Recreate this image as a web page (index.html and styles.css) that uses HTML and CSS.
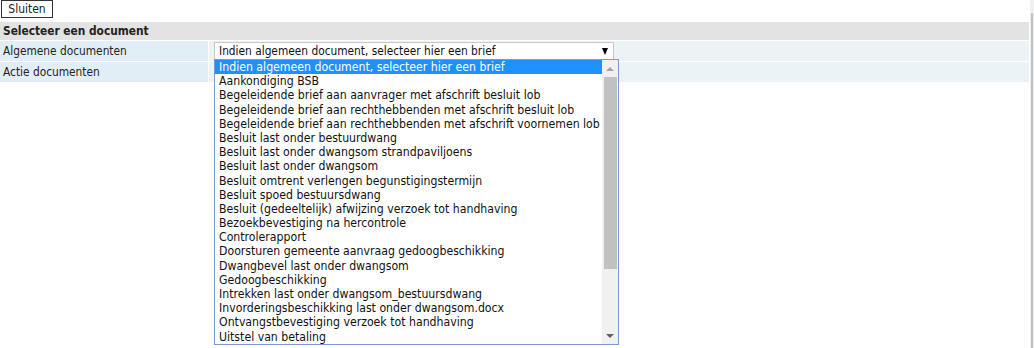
FILE: index.html
```html
<!DOCTYPE html>
<html>
<head>
<meta charset="utf-8">
<link rel="stylesheet" href="styles.css">
</head>
<body>
<div class="page">
  <div class="toolbar"><button class="btn">Sluiten</button></div>
  <div class="table">
    <div class="head">Selecteer een document</div>
    <div class="row">
      <div class="label">Algemene documenten</div>
      <div class="value">
        <div class="select-wrap">
          <div class="select"><span>Indien algemeen document, selecteer hier een brief</span><span class="arrow"></span></div>
          <div class="dropdown">
            <ul class="options">
              <li class="sel">Indien algemeen document, selecteer hier een brief</li>
              <li>Aankondiging BSB</li>
              <li>Begeleidende brief aan aanvrager met afschrift besluit lob</li>
              <li>Begeleidende brief aan rechthebbenden met afschrift besluit lob</li>
              <li>Begeleidende brief aan rechthebbenden met afschrift voornemen lob</li>
              <li>Besluit last onder bestuurdwang</li>
              <li>Besluit last onder dwangsom strandpaviljoens</li>
              <li>Besluit last onder dwangsom</li>
              <li>Besluit omtrent verlengen begunstigingstermijn</li>
              <li>Besluit spoed bestuursdwang</li>
              <li>Besluit (gedeeltelijk) afwijzing verzoek tot handhaving</li>
              <li>Bezoekbevestiging na hercontrole</li>
              <li>Controlerapport</li>
              <li>Doorsturen gemeente aanvraag gedoogbeschikking</li>
              <li>Dwangbevel last onder dwangsom</li>
              <li>Gedoogbeschikking</li>
              <li>Intrekken last onder dwangsom_bestuursdwang</li>
              <li>Invorderingsbeschikking last onder dwangsom.docx</li>
              <li>Ontvangstbevestiging verzoek tot handhaving</li>
              <li>Uitstel van betaling</li>
            </ul>
            <div class="sb">
              <div class="sb-up"></div>
              <div class="sb-track"><div class="sb-thumb"></div></div>
              <div class="sb-down"></div>
            </div>
          </div>
        </div>
      </div>
    </div>
    <div class="row">
      <div class="label">Actie documenten</div>
      <div class="value"></div>
    </div>
  </div>
</div>
<div class="pscroll"><div class="pthumb"></div></div>
</body>
</html>
```

FILE: styles.css
```css
html, body { margin: 0; padding: 0; }
body {
  display: flex;
  width: 1034px;
  height: 348px;
  overflow: hidden;
  background: #fff;
  font-family: "DejaVu Sans Condensed", "DejaVu Sans", sans-serif;
  font-size: 11.8px;
  color: #222;
}
.page { flex: 1; margin-right: 1px; }
.pscroll { width: 4px; background: #f0f0f0; padding-top: 13px; box-sizing: border-box; }
.pthumb { width: 2px; margin-left: 1px; height: 335px; background: #c1c1c1; }

.toolbar { height: 22px; padding-left: 1px; }
.btn {
  display: block;
  box-sizing: border-box;
  width: 52px;
  height: 18px;
  margin: 0;
  padding: 0;
  border: 1px solid #333;
  background: #fff;
  font: inherit;
  font-size: 12px;
  color: #222;
  line-height: 15px;
}
.table { display: flex; flex-direction: column; gap: 1px; }
.head {
  height: 18px;
  line-height: 18px;
  background: #e3e3e3;
  font-weight: bold;
  padding-left: 3px;
}
.row { display: flex; gap: 1px; height: 20px; }
.label { width: 208px; background: #e2eef5; padding-left: 3px; box-sizing: border-box; line-height: 20px; }
.value { flex: 1; background: #ebf3f6; padding: 1px 0 0 5px; }
.select-wrap { position: relative; width: 400px; }
.select {
  box-sizing: border-box;
  height: 18px;
  border: 1px solid #c8c8c8;
  background: #fff;
  display: flex;
  align-items: center;
  justify-content: space-between;
  padding: 0 5px 0 4px;
  color: #111;
}
.arrow {
  width: 0; height: 0;
  border-left: 3.5px solid transparent;
  border-right: 3.5px solid transparent;
  border-top: 7px solid #000;
}
.dropdown {
  position: absolute;
  left: 0;
  top: 17px;
  width: 405px;
  height: 286px;
  box-sizing: border-box;
  border: 1px solid #7a9bd2;
  background: #fff;
  display: flex;
  overflow: hidden;
  z-index: 2;
}
.options { list-style: none; margin: 0; padding: 0; flex: 1; font-size: 12.2px; }
.options li { height: 14.2px; line-height: 14.2px; padding-left: 4px; white-space: nowrap; color: #111; }
.options li.sel { background: #1e90ff; color: #fff; }
.sb { width: 16px; background: #f0f0f0; display: flex; flex-direction: column; }
.sb-up, .sb-down { height: 17px; display: flex; align-items: center; justify-content: center; }
.sb-up::before {
  content: "";
  border-left: 4px solid transparent; border-right: 4px solid transparent;
  border-bottom: 4px solid #a3a3a3;
}
.sb-down::before {
  content: "";
  border-left: 4px solid transparent; border-right: 4px solid transparent;
  border-top: 4px solid #606060;
}
.sb-track { flex: 1; padding: 0 1px 0 2px; }
.sb-thumb { height: 192px; background: #c1c1c1; }
```
